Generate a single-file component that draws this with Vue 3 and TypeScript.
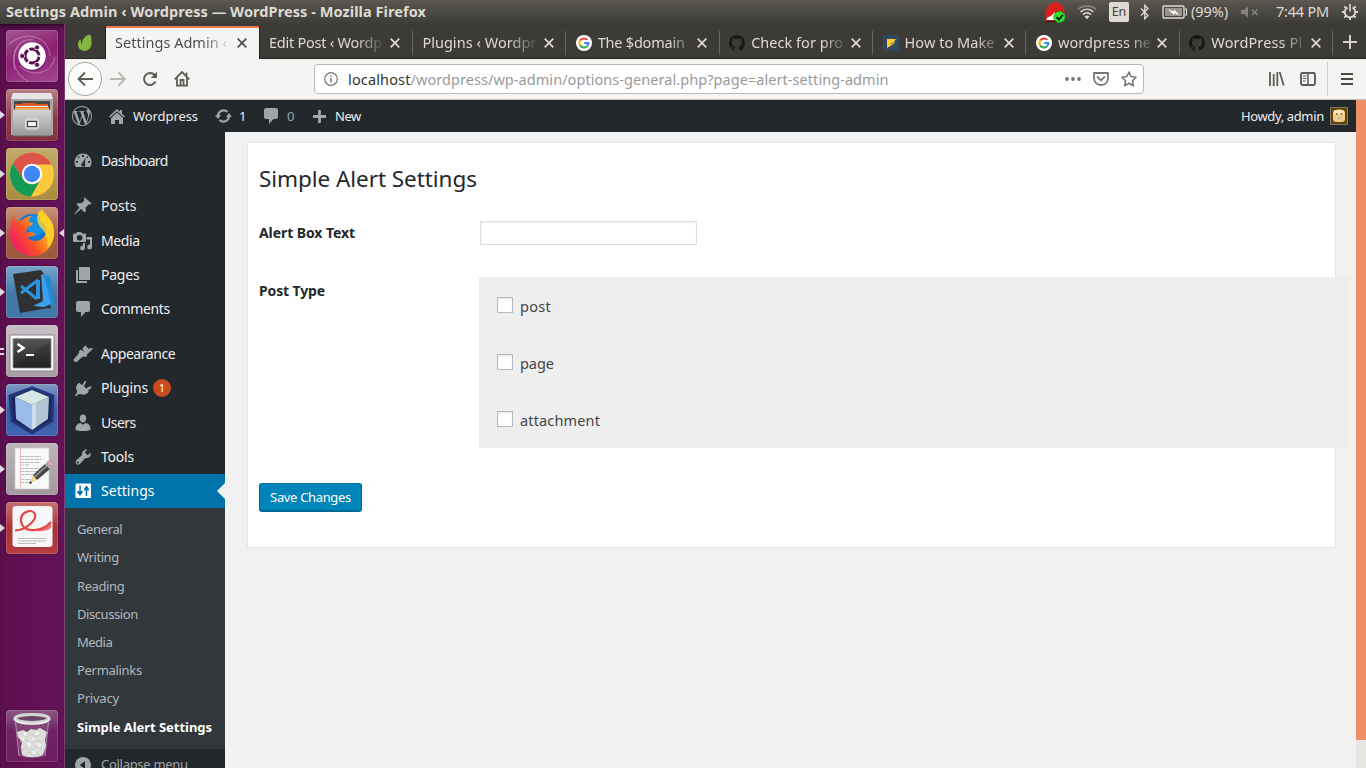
<script setup lang="ts">
import { ref } from 'vue'

// Spreads the text of an element over a given width by letter spacing.
const vFit = {
  mounted(el: HTMLElement, binding: { value: number }) {
    const text = (el.textContent || '').trim()
    el.style.display = 'inline-block'
    el.style.whiteSpace = 'pre'
    const natural = el.getBoundingClientRect().width
    if (text.length > 1) {
      el.style.letterSpacing = ((binding.value - natural) / (text.length - 0.5)).toFixed(3) + 'px'
    }
    el.style.width = binding.value + 'px'
  },
}

const google =
  '<circle cx="8" cy="8" r="8" fill="#fff"/><g fill="none" stroke-width="2.1"><path d="M4.3 5.4A4.5 4.5 0 0 1 11.3 4.9" stroke="#ea4335"/><path d="M4.3 5.4A4.5 4.5 0 0 0 4.2 10.5" stroke="#fbbc05"/><path d="M4.2 10.4A4.5 4.5 0 0 0 10.9 11.5" stroke="#34a853"/><path d="M8.2 8H12.5A4.5 4.5 0 0 1 10.8 11.5" stroke="#4285f4"/></g>'
const github =
  '<path fill="#191717" d="M8 0C3.58 0 0 3.58 0 8c0 3.54 2.29 6.53 5.47 7.59.4.07.55-.17.55-.38 0-.19-.01-.82-.01-1.49-2.01.37-2.53-.49-2.69-.94-.09-.23-.48-.94-.82-1.13-.28-.15-.68-.52-.01-.53.63-.01 1.08.58 1.23.82.72 1.21 1.87.87 2.33.66.07-.52.28-.87.51-1.07-1.78-.2-3.64-.89-3.64-3.95 0-.87.31-1.59.82-2.15-.08-.2-.36-1.02.08-2.12 0 0 .67-.21 2.2.82.64-.18 1.32-.27 2-.27.68 0 1.36.09 2 .27 1.53-1.04 2.2-.82 2.2-.82.44 1.1.16 1.92.08 2.12.51.56.82 1.27.82 2.15 0 3.07-1.87 3.75-3.65 3.95.29.25.54.73.54 1.48 0 1.07-.01 1.93-.01 2.2 0 .21.15.46.55.38A8.01 8.01 0 0016 8c0-4.42-3.58-8-8-8z"/>'
const bolt = '<path fill="#34495e" d="M0 0h16v16H0z"/><path fill="#fc3" d="M4 4h9l-2.4 3.4H13L4 13z"/><path d="M7 9l6-1.6" stroke="#34495e" stroke-width=".6"/>'

interface Tab { text: string; w: number; icon?: string; active?: boolean }
const tabs: Tab[] = [
  { text: 'Settings Admin ‹', w: 112, active: true },
  { text: 'Edit Post ‹ Wordp', w: 113 },
  { text: 'Plugins ‹ Wordpr', w: 114 },
  { text: 'The $domain', w: 87, icon: google },
  { text: 'Check for pro', w: 92, icon: github },
  { text: 'How to Make', w: 90, icon: bolt },
  { text: 'wordpress ne', w: 93, icon: google },
  { text: 'WordPress Pl', w: 91, icon: github },
]

interface App { name: string; bg: string; art: string; marks: number; focus?: boolean }
const apps: App[] = [
  {
    name: 'dash', bg: 'linear-gradient(160deg,#a2578f,#8c1f75 50%,#a34a90)', marks: 0,
    art: '<g fill="none" stroke="#fff" stroke-opacity=".25" stroke-width="1.3"><path d="M3 14C20 0 42 6 44 26"/><path d="M9 40C4 20 14 8 27 10"/><path d="M49 27C46 44 26 48 14 36"/><path d="M22 51C8 44 4 28 12 16"/></g><circle cx="26" cy="27" r="14" fill="#570c49" opacity=".5"/><circle cx="26" cy="26" r="13.7" fill="#fff"/><circle cx="26" cy="26" r="7" fill="none" stroke="#5e1150" stroke-width="3" stroke-dasharray="13 1.66" stroke-dashoffset="-.8"/><g fill="#5e1150" stroke="#fff" stroke-width=".7"><circle cx="16.2" cy="26" r="2.5"/><circle cx="31" cy="17.4" r="2.5"/><circle cx="31" cy="34.8" r="2.5"/></g>',
  },
  {
    name: 'files', bg: 'linear-gradient(#b98086,#8f3a48 55%,#84303e)', marks: 1,
    art: '<defs><linearGradient id="fa" x2="0" y2="1"><stop stop-color="#d4d4d4"/><stop offset="1" stop-color="#989898"/></linearGradient></defs><path d="M7 4h38l2 6v36H5V10z" fill="#a8a8a8"/><path d="M7 4h38l2 6H5z" fill="#e6e6e6"/><path d="M8 12h36v9H8z" fill="#4c4845"/><path d="M9 15h7l1-1h12l1 1h12v6H9z" fill="#d85b2a"/><path d="M9 18.500h34v2.500H9z" fill="#f5a94d"/><path d="M10 17h32v1H10z" fill="#fff"/><path d="M7 20.700h38V47H7z" fill="url(#fa)"/><path d="M7 46.500h38v1H7z" fill="#666"/><rect x="19.500" y="30" width="13" height="10" rx="2" fill="#bbb" stroke="#e4e4e4" stroke-width="1"/><rect x="21.500" y="32.500" width="9" height="5" fill="#eee" stroke="#444" stroke-width="1"/>',
  },
  {
    name: 'chrome', bg: 'linear-gradient(#c3ad6d,#a98b3e)', marks: 1,
    art: '<circle cx="26" cy="26.500" r="22" fill="#fbc93b"/><path d="M6.900 15.500A22 22 0 0 1 45.500 16.500H26a10 10 0 0 0-9 5.500l-.5 9z" fill="#dc5548"/><path d="M6.900 15.500A22 22 0 0 0 25 48.500L34.500 31.500A10 10 0 0 1 17.400 31.500z" fill="#139b57"/><circle cx="26" cy="26" r="10.200" fill="#fff"/><circle cx="26" cy="26" r="8.200" fill="#4285f4"/>',
  },
  {
    name: 'firefox', bg: 'linear-gradient(#c89378,#a15d43 55%,#9b5940)', marks: 1, focus: true,
    art: '<defs><linearGradient id="ff" x1=".95" y1=".1" x2=".1" y2=".7"><stop stop-color="#ffe226"/><stop offset=".4" stop-color="#ffa21b"/><stop offset=".7" stop-color="#fb4f28"/><stop offset="1" stop-color="#f4245c"/></linearGradient></defs><circle cx="26" cy="23" r="16" fill="#1273d6"/><path d="M15 15c5-7 15-9 20-4l2 15-9 4z" fill="#1490e4"/><path d="M9 7c-1 4 0 7 1 9 2-3 5-4 7-3 2-3 5-4 9-4-3 2-4 4-3 6l4 1c0 3-6 3-6 6l-1 4c3-2 8-1 10 2-3 0-5 3-9 2 4 5 12 5 16 1 4-4 5-9 1-14-6-6-6-9-2-15 3 6 12 10 12 23C48 40 38 49 27 49 14 49 4 39 4 27c0-8 2-15 5-20z" fill="url(#ff)"/><path d="M34 3c3 6 14 12 14 24 0 6-3 11-7 14 2-8-1-15-6-20-5-6-5-12-1-18z" fill="#ffd52b" opacity=".8"/>',
  },
  {
    name: 'code', bg: 'linear-gradient(#77a5cc,#4377a7 55%,#4278aa)', marks: 1,
    art: '<path d="M37 8l7 2 4 27-8 5z" fill="#2489d3"/><path d="M7 8l28-4 3 4 7 35-3-1-28 5z" fill="#303032"/><path d="M35 9l3-1 7 30-7 3-11-1 10-5z" fill="#39a1ec"/><path d="M15 20l16 13M15 27l17-13" stroke="#2b94dc" stroke-width="3"/><path d="M32 14v19" stroke="#2b94dc" stroke-width="4"/>',
  },
  {
    name: 'terminal', bg: 'linear-gradient(#c7bfc5,#a79da5)', marks: 2,
    art: '<defs><linearGradient id="tm" x2="0" y2="1"><stop stop-color="#555"/><stop offset="1" stop-color="#252525"/></linearGradient></defs><path d="M4 10h44v36H4z" fill="#f7f7f7" stroke="#8b868b"/><path d="M7 13.500h38V43H7z" fill="url(#tm)" stroke="#999" stroke-width=".8"/><path d="M7 43L45 15v28z" fill="#111" opacity=".2"/><path d="M11.500 19l6 4-6 4" fill="none" stroke="#fff" stroke-width="2.500"/><path d="M20 30h8" stroke="#fff" stroke-width="2"/>',
  },
  {
    name: 'cube', bg: 'linear-gradient(#7f96c5,#3e5fa8 50%,#4063b0)', marks: 1,
    art: '<path d="M26 4l21 8-1 25-20 12L6 37 4 12z" fill="#18245a" stroke="#22377c" stroke-width="3" stroke-linejoin="round"/><path d="M26 6l17 7-17 8L9 13z" fill="#d6e8e6"/><path d="M9 13l17 8v25L10 35z" fill="#9bbbea"/><path d="M26 21l17-8-1 22-16 11z" fill="#b0c6d2"/><path d="M26 21l4-2v24l-4 3z" fill="#d9e8f4" opacity=".7"/>',
  },
  {
    name: 'editor', bg: 'linear-gradient(#bdb5bb,#a198a0)', marks: 1,
    art: '<path d="M9 5h34v41H9z" fill="#f8f8f8" stroke="#ccc" stroke-width=".8"/><path d="M14.500 5v41" stroke="#eba9a9" stroke-width=".8"/><g stroke="#bbb" stroke-width="1" stroke-dasharray="3 .8 5 .6"><path d="M15 13.500h20M15 16.500h21M15 19.500h18M15 22h8M15 25.500h22M15 28.500h18M15 31.500h16M15 36.500h13M15 39.500h10"/></g><path d="M23 41l4-9 4 5z" fill="#eed984"/><path d="M23 41l1.500-3 1.600 2z" fill="#222"/><path d="M27 32l12-11 5 5-13 11z" fill="#444"/><path d="M28 33l12-11 1.500 1.500-12 11z" fill="#888"/><path d="M39 21l2-2 5 5-2 2z" fill="#aaa"/><path d="M41 19c2-3 8 1 5 5z" fill="#e7a4cd" stroke="#b77" stroke-width=".5"/>',
  },
  {
    name: 'reader', bg: 'linear-gradient(#c7706f,#a93236 50%,#b63e40)', marks: 1,
    art: '<rect x="7" y="5" width="39" height="41" rx="3.500" fill="#8d2b2e" opacity=".6"/><rect x="6.500" y="4" width="40" height="41" rx="3.500" fill="#f7f7f7"/><path d="M9 28.500C21 28 31 17 29 12 26 6 14 10 15 19c1 12 20 12 30 1" fill="none" stroke="#e34848" stroke-width="2.200"/><path d="M25 28c8 0 15-4 20-8v6c-6 4-13 4-20 2z" fill="#e34848" opacity=".75"/><g stroke="#bbb" stroke-width="1.200"><path d="M12 36.500h28M12 39h28M12 41.500h18"/></g>',
  },
]
const trash =
  '<path d="M9 9l4 37c5 3 21 3 26 0l4-37z" fill="#9c6c93" opacity=".4"/><path d="M9.500 12L13 46M42.500 12L39 46" stroke="#c8b5c4" stroke-width="1" opacity=".7"/><path d="M11 22l6-2 4 2 4-3 5 1 4-2 7 4-2 8 1 6-3 9c-6 3-16 3-21 0l-1-8 1-5-4-5z" fill="#dcdedb"/><g fill="none" stroke="#c6c8c3" stroke-width="1"><path d="M16 24l5 3 4-4 4 5 6-4M14 32l6-3 5 5 5-4 6 2M16 40l5-4 4 5 5-5 6 3M19 45l4-3 5 4 5-3"/></g><g fill="#f4f5f3"><path d="M17 22l4 1-2 4zM30 21l4 2-5 3zM21 32l5 2-4 4zM31 33l5 1-4 4zM15 28l4 0-2 3zM27 27l3 2-4 2zM26 41l4 0-2 4z"/></g><ellipse cx="26" cy="8.500" rx="17" ry="4" fill="#6e4467" stroke="#d4d5d1" stroke-width="3.200"/><path d="M9 9c1 7 33 7 34 0" fill="none" stroke="#fff" stroke-width="1.200"/>'

const ic = {
  dashboard: '<path fill-rule="evenodd" d="M10 2.500a8.500 8.500 0 0 0-8.300 10.300c.3 1.500.8 2.700 1.300 3.200h14c.6-.6 1-1.700 1.300-3.200A8.500 8.500 0 0 0 10 2.500zM9 4h2v2H9zM5 5.500l1.500 0 0 1.600-1.600 0zM13.600 5.500h1.500v1.600h-1.600zM2.900 10h2v1.800h-2zM15 10h2.100v1.800H15zM12.500 6.500l-.7 5.800a2 2 0 1 1-2.400-.4z"/>',
  posts: '<path d="M11.400 1.200l7.300 6.400-1.500 1-1.300-.3-3.200 3.300.2 3.700-1.600 1-3.200-3.300-6.300 5.400-.5-.5 5.200-6.400-3-3 1.300-1.500 3.500.2 3.200-2.700-.5-2z"/>',
  media: '<path fill-rule="evenodd" d="M1 2.500h2L4 1h4l1.200 1.500H12a1 1 0 0 1 1 1V11H1a1 1 0 0 1-1-1V3.500a1 1 0 0 1 1-1zM6.700 4a2.800 2.800 0 1 0 0 5.600 2.800 2.800 0 0 0 0-5.600zM13.500 6H19v10a2.400 2.400 0 1 1-2-2.400V8.500h-3.500zM12 12v5a2.400 2.400 0 1 1-2-2.400V12z"/>',
  pages: '<path d="M6 2h11v13H6zM3 5h2v11h9v2H3z"/>',
  comments: '<path d="M5 2h10a2 2 0 0 1 2 2v7a2 2 0 0 1-2 2h-2.500L8 18v-5H5a2 2 0 0 1-2-2V4a2 2 0 0 1 2-2z"/>',
  appearance: '<path d="M9.500 4.300l3-3.100 3.300 3 3.500-.1.700.7-7.400 6.900zM8.300 5.500l6 6-1.500 1.500-2.600-.4c-2 1-4.500 4-6.300 5.100-1.800 1-4-1-2.900-2.800 1.100-1.800 4.100-3.900 5.200-6.300l-.4-1.700z"/><path d="M12.600 1.600l4.200 4" stroke="#23282d" stroke-width=".7"/>',
  plugins: '<path d="M13.100 4.400L10.800 8l2.500 2.500 3.700-2.200c1-.3 2 .9 1.200 1.700l-3.300 2.400 1.100 1.200c-1.500 2.400-5.300 4.400-8.500 2.400l-2.300.3-2 1.900-1.300-1.200 2-2 .1-2.300C2 9.300 3.800 6 6.300 4.700l2.800 2.500 2.500-3.800c.8-.9 2 .1 1.500 1z"/>',
  users: '<path d="M10 9.500c-2.200 0-3.200-2.300-3.200-4.300C6.800 2.800 8 1.500 10 1.500s3.200 1.300 3.200 3.700c0 2-1 4.300-3.200 4.300zM2.500 15.500c0-3 2-5.200 5-5.500l2.500 1.800 2.500-1.800c3 .3 5 2.500 5 5.500v1.200C15 18.400 5 18.400 2.500 16.700z"/>',
  tools: '<path d="M17.600 5.700c.8 3-1.600 5.900-5.100 5.400l-5.700 6c-2.300 2-5.500-1-3.700-3.500l6-5.600C8.400 5 11 2.200 14.400 2.600l-2.700 2.700 2.800 3z"/><circle cx="4.800" cy="15.500" r="1" fill="#23282d"/>',
  settings: '<rect x="2.500" y="2.500" width="15.500" height="14.500" rx="1.200"/><g fill="#0073aa"><path d="M6.300 4.500h1.500V11H10l-3 4-3-4h2.300z"/><path d="M4.300 10h5.500v1H4.300z"/><path d="M12.700 15h1.500V8.500h2.300l-3-4-3 4h2.200z"/><path d="M10.800 8.500h5.500v1h-5.500z"/></g>',
}
interface Item { text: string; w: number; icon: string; gap?: boolean; badge?: string; current?: boolean }
const menu: Item[] = [
  { text: 'Dashboard', w: 67, icon: ic.dashboard },
  { text: 'Posts', w: 35.5, icon: ic.posts, gap: true },
  { text: 'Media', w: 39, icon: ic.media },
  { text: 'Pages', w: 38.5, icon: ic.pages },
  { text: 'Comments', w: 69, icon: ic.comments },
  { text: 'Appearance', w: 74.5, icon: ic.appearance, gap: true },
  { text: 'Plugins', w: 47, icon: ic.plugins, badge: '1' },
  { text: 'Users', w: 35, icon: ic.users },
  { text: 'Tools', w: 33, icon: ic.tools },
  { text: 'Settings', w: 53.5, icon: ic.settings, current: true },
]
const submenu = [
  { text: 'General', w: 45.5 },
  { text: 'Writing', w: 42 },
  { text: 'Reading', w: 47.5 },
  { text: 'Discussion', w: 61 },
  { text: 'Media', w: 35.5 },
  { text: 'Permalinks', w: 65 },
  { text: 'Privacy', w: 42 },
  { text: 'Simple Alert Settings', w: 135, current: true },
]
const postTypes = ref([
  { text: 'post', w: 31, on: false },
  { text: 'page', w: 34, on: false },
  { text: 'attachment', w: 80, on: false },
])
const alertText = ref('')
</script>

<template>
  <div class="desktop">
    <header class="panel">
      <span class="win-title" v-fit="420">Settings Admin ‹ Wordpress — WordPress - Mozilla Firefox</span>
      <div class="tray">
        <svg class="hat" width="22" height="22" viewBox="0 0 22 22"><path d="M1 20C2 17 0 13 3 7 6 0 16-1 19 6c2 4 2 8 2 12z" fill="#dc1f1c" /><path d="M3 19c-1-1 0-3 4-4l4-4 0 4 2 1-1 3z" fill="#fff" /><path d="M2 20.500h10" stroke="#400" stroke-width="1" /><circle cx="15.500" cy="16" r="5.800" fill="#2be52b" stroke="#1a701a" stroke-width=".6" /><path d="M12.500 16l2.400 2.700 4-5" fill="none" stroke="#111" stroke-width="1.800" /></svg>
        <svg class="wifi" width="20" height="16" viewBox="0 0 20 16" fill="none" stroke="#dfdbd2"><path d="M1 5.500C6 .8 14 .8 19 5.500" stroke="#8d8a82" stroke-width="1.500" /><path d="M3.500 8c4-3.600 9-3.600 13 0" stroke-width="1.500" /><path d="M6 10.600c2.500-2.300 5.500-2.300 8 0" stroke-width="1.500" /><path d="M7.500 12.500c1.500-1.300 3.500-1.300 5 0L10 15.200z" fill="#dfdbd2" stroke="none" /></svg>
        <span class="lang">En</span>
        <svg class="bt" width="10" height="16" viewBox="0 0 10 16" fill="none" stroke="#dfdbd2" stroke-width="1.300"><path d="M1 4.500l7 7-3.300 3.300V1.200L8 4.500l-7 7" /></svg>
        <svg class="bat" width="26" height="14" viewBox="0 0 26 14"><rect x="1" y="1" width="21" height="12" rx="1" fill="none" stroke="#dfdbd2" stroke-width="1.400" /><path d="M3 3h17v8H3z" fill="#97948b" /><path d="M23 4h1.500v6H23" fill="none" stroke="#dfdbd2" stroke-width="1.200" /><path d="M6 4l6 2.500 0-2 6 6-6-2.500 0 2z" fill="#fff" /></svg>
        <span class="pct" v-fit="37">(99%)</span>
        <svg class="snd" width="18" height="12" viewBox="0 0 18 12"><path d="M0 4h3l4-3.500v11L3 8H0z" fill="#88857d" /><path d="M11 3.500l5.500 5.500M16.500 3.500L11 9" stroke="#88857d" stroke-width="1.500" /></svg>
        <span class="clock" v-fit="53">7:44 PM</span>
        <svg class="gear" width="16" height="16" viewBox="0 0 16 16" fill="none" stroke="#dfdbd2"><path d="M5.500 3.500a5.200 5.200 0 1 0 5 0" stroke-width="1.700" /><path d="M8 0v7.500" stroke-width="1.600" /><path d="M0 8h3M13 8h3M8 13v3M2.300 2.300l2 2M13.700 2.300l-2 2M2.300 13.700l2-2M13.700 13.700l-2-2" stroke-width="1.900" /></svg>
      </div>
    </header>

    <div class="workspace">
      <aside class="launcher">
        <div v-for="a in apps" :key="a.name" class="slot">
          <div class="marks"><i v-for="n in a.marks" :key="n" :class="{ bar: a.marks > 1 }"></i></div>
          <div class="tile" :style="{ background: a.bg }"><svg width="52" height="52" viewBox="0 0 52 52" v-html="a.art"></svg></div>
          <b v-if="a.focus" class="focus"></b>
        </div>
        <div class="slot trash"><div class="marks"></div><div class="tile bin"><svg width="52" height="52" viewBox="0 0 52 52" v-html="trash"></svg></div></div>
      </aside>

      <main class="firefox">
        <div class="tabbar">
          <div class="pinned"><svg width="16" height="18" viewBox="0 0 16 18"><path d="M12.800.5C14 1 15 5 14.500 10c-.4 4-3 7-7 7C3.500 17 1 14 1 10.500c0-2 .7-4 2-5 .5-.3.9 0 .8.500-.2 2 .4 3.800 1 4.500C4.500 6 8 1.500 12.800.5z" fill="#82b541" /></svg></div>
          <div v-for="t in tabs" :key="t.text" class="tab" :class="{ active: t.active }">
            <svg v-if="t.icon" class="fav" width="16" height="16" viewBox="0 0 16 16" v-html="t.icon"></svg>
            <div class="tabtext" :class="{ short: t.icon }"><span v-fit="t.w">{{ t.text }}</span></div>
            <svg class="close" width="10" height="10" viewBox="0 0 10 10"><path d="M.7.700l8.600 8.600M9.300.700L.7 9.300" stroke="currentColor" stroke-width="1.700" /></svg>
          </div>
          <div class="plus"><svg width="14" height="14" viewBox="0 0 14 14"><path d="M7 0v14M0 7h14" stroke="#d6d2c9" stroke-width="2" /></svg></div>
        </div>

        <div class="toolbar">
          <div class="back"><svg width="16" height="16" viewBox="0 0 16 16" fill="none" stroke="#5c5b58" stroke-width="1.800"><path d="M16 8H1.500M8 1.500L1.500 8 8 14.500" /></svg></div>
          <svg class="fwd" width="16" height="16" viewBox="0 0 16 16" fill="none" stroke="#b9b7b3" stroke-width="1.800"><path d="M0 8h14.500M8.500 1.500L15 8l-6.500 6.500" /></svg>
          <svg class="reload" width="16" height="16" viewBox="0 0 16 16" fill="none" stroke="#5c5b58" stroke-width="1.900"><path d="M13.500 10.500A6 6 0 1 1 12.500 4l1 1.200" /><path d="M15 .8V7H8.800z" fill="#5c5b58" stroke="none" /></svg>
          <svg class="homebtn" width="16" height="16" viewBox="0 0 16 16" fill="none" stroke="#5c5b58" stroke-width="1.800"><path d="M.7 8.300L8 1l7.300 7.300M3 7v7.700h10V7" /><path d="M6.500 14V9h3v5" /><path d="M12.500 1.500V5" /></svg>
          <div class="urlbar">
            <svg width="14" height="14" viewBox="0 0 14 14"><circle cx="7" cy="7" r="6.300" fill="none" stroke="#777" stroke-width="1.200" /><path d="M7 6v4.500M7 3.200v1.600" stroke="#777" stroke-width="1.500" /></svg>
            <span class="host" v-fit="62.5">localhost</span><span class="path" v-fit="478">/wordpress/wp-admin/options-general.php?page=alert-setting-admin</span>
            <svg class="dots" width="16" height="4" viewBox="0 0 16 4" fill="#777673"><circle cx="2" cy="2" r="1.900" /><circle cx="8" cy="2" r="1.900" /><circle cx="14" cy="2" r="1.900" /></svg>
            <svg class="pocket" width="16" height="14" viewBox="0 0 16 14" fill="none" stroke="#777673" stroke-width="1.800"><path d="M1 1h14v5c0 4.500-3 7-7 7S1 10.500 1 6z" stroke-linejoin="round" /><path d="M4.500 5L8 8.300 11.500 5" stroke-linecap="round" /></svg>
            <svg class="star" width="16" height="16" viewBox="0 0 16 16" fill="none" stroke="#777673" stroke-width="1.600" stroke-linejoin="round"><path d="M8 1l2.100 4.500 4.900.7-3.500 3.500.8 5L8 12.300l-4.300 2.400.8-5L1 6.200l4.900-.7z" /></svg>
          </div>
          <svg class="library" width="16" height="14" viewBox="0 0 16 14" stroke="#5c5b58" stroke-width="1.800"><path d="M1 0v14M4.700 2v12M8.300 0v14M10.700 0l4 13.500" /></svg>
          <svg class="sidebar" width="16" height="14" viewBox="0 0 16 14" fill="none" stroke="#5c5b58"><rect x="1" y="1" width="14" height="12" rx="1.500" stroke-width="1.900" /><path d="M8 1v12" stroke-width="1.500" /><path d="M3 4h3.500M3 6.500h3.500M3 9h2.500" stroke-width="1" /></svg>
          <div class="burger"><svg width="12" height="12" viewBox="0 0 12 12" stroke="#4a4945" stroke-width="1.800"><path d="M0 1h12M0 6h12M0 11h12" /></svg></div>
        </div>

        <div class="viewport">
          <div class="wp">
            <nav class="adminbar">
              <svg class="wplogo" width="20" height="20" viewBox="0 0 24 24" fill="#a0a5aa"><path d="M21.469 6.825c.84 1.537 1.318 3.300 1.318 5.175 0 3.979-2.156 7.456-5.363 9.325l3.295-9.527c.615-1.540.82-2.771.82-3.864 0-.405-.026-.780-.070-1.110m-7.981.105c.647-.030 1.232-.105 1.232-.105.582-.075.514-.930-.067-.899 0 0-1.755.135-2.880.135-1.064 0-2.850-.150-2.850-.150-.585-.030-.661.855-.075.885 0 0 .540.061 1.125.090l1.680 4.605-2.370 7.080L5.354 6.900c.649-.030 1.234-.100 1.234-.100.585-.075.516-.930-.065-.896 0 0-1.746.138-2.874.138-.200 0-.438-.008-.690-.015C4.911 3.150 8.235 1.215 12 1.215c2.809 0 5.365 1.072 7.286 2.833-.046-.003-.091-.009-.141-.009-1.060 0-1.812.923-1.812 1.914 0 .890.513 1.643 1.060 2.531.411.720.890 1.643.890 2.977 0 .915-.354 1.994-.821 3.479l-1.075 3.585-3.900-11.610.001.014zM12 22.784c-1.059 0-2.081-.153-3.048-.437l3.237-9.406 3.315 9.087c.024.053.050.101.078.149-1.120.393-2.325.609-3.582.609M1.211 12c0-1.564.336-3.050.935-4.390L7.290 21.709C3.694 19.960 1.212 16.271 1.211 12M12 0C5.385 0 0 5.385 0 12s5.385 12 12 12 12-5.385 12-12S18.615 0 12 0" /></svg>
              <svg class="house" width="16" height="15" viewBox="0 0 16 15" fill="#a0a5aa"><path d="M8 0l3 2.800V1h2v3.700L16 7.600l-1 1L8 2.200 1 8.600l-1-1z" /><path d="M8 3.600l6 5.400v6h-4v-4H6v4H2V9z" /></svg>
              <span class="site" v-fit="65">Wordpress</span>
              <svg class="upd" width="17" height="14" viewBox="0 0 17 14" fill="none" stroke="#a0a5aa" stroke-width="2.300"><path d="M3 6.500A5.600 5.600 0 0 1 12.500 3M14 7.500A5.600 5.600 0 0 1 4.500 11" /><path d="M0 6h6L3 10zM11 8h6l-3-4z" fill="#a0a5aa" stroke="none" /></svg>
              <span class="n1">1</span>
              <svg class="bub" width="20" height="20" viewBox="0 0 20 20" fill="#a0a5aa" v-html="ic.comments"></svg>
              <span class="n0">0</span>
              <svg class="add" width="13" height="13" viewBox="0 0 13 13"><path d="M6.500 0v13M0 6.500h13" stroke="#a0a5aa" stroke-width="2.800" /></svg>
              <span class="new" v-fit="26">New</span>
              <span class="howdy" v-fit="83">Howdy, admin</span>
              <svg class="avatar" width="18" height="18" viewBox="0 0 18 18"><path d="M.5.500h17v17H.5z" fill="#604306" stroke="#827865" /><rect x="3" y="3" width="12" height="12" rx="3" fill="#f4cc8a" /><path d="M4 4c2-2 8-2 10 0v3H4z" fill="#fbe5b9" /><circle cx="6.800" cy="7" r=".8" fill="#3b2412" /><circle cx="11.500" cy="7" r=".8" fill="#3b2412" /><circle cx="9" cy="11.200" r="1.600" fill="#c2b8a8" /></svg>
            </nav>

            <div class="wpbody">
              <div class="adminmenu">
                <div v-for="m in menu" :key="m.text" class="item" :class="{ gap: m.gap, current: m.current }">
                  <svg width="20" height="20" viewBox="0 0 20 20" v-html="m.icon"></svg>
                  <span v-fit="m.w">{{ m.text }}</span>
                  <em v-if="m.badge">{{ m.badge }}</em>
                  <i v-if="m.current" class="notch"></i>
                </div>
                <ul class="sub">
                  <li v-for="s in submenu" :key="s.text" :class="{ on: s.current }"><span v-fit="s.w">{{ s.text }}</span></li>
                </ul>
                <div class="collapse">
                  <svg width="16" height="16" viewBox="0 0 16 16"><circle cx="8" cy="8" r="8" fill="#a0a5aa" /><path d="M10 4v8L4.800 8z" fill="#23282d" /></svg>
                  <span v-fit="87">Collapse menu</span>
                </div>
              </div>

              <section class="content">
                <div class="card">
                  <h2><span v-fit="218">Simple Alert Settings</span></h2>
                  <div class="field">
                    <label class="th"><span v-fit="96">Alert Box Text</span></label>
                    <input v-model="alertText" type="text" />
                  </div>
                  <div class="field types">
                    <label class="th"><span v-fit="66">Post Type</span></label>
                    <div class="box">
                      <label v-for="p in postTypes" :key="p.text" class="opt">
                        <input v-model="p.on" type="checkbox" /><span v-fit="p.w">{{ p.text }}</span>
                      </label>
                    </div>
                  </div>
                  <button><span v-fit="81">Save Changes</span></button>
                </div>
              </section>
            </div>
          </div>
          <div class="scroll"><div class="thumb"></div></div>
        </div>
      </main>
    </div>
  </div>
</template>

<style>
html, body { margin: 0; overflow: hidden; }
</style>

<style scoped>
* { box-sizing: border-box; }
svg { display: block; flex: none; }
.desktop { width: 1366px; height: 768px; overflow: hidden; display: flex; flex-direction: column; font-family: "Noto Sans", "Open Sans", sans-serif; font-size: 14px; }
.panel { height: 24px; flex: none; background: linear-gradient(#5d5a51, #53514a 20%, #3d3c37); display: flex; align-items: center; padding-left: 6px; color: #dfdbd2; }
.win-title { font-weight: 700; font-size: 14.5px; line-height: 22px; height: 24px; flex: none; }
.tray { margin-left: auto; width: 322px; flex: none; display: flex; align-items: center; font-size: 14.5px; line-height: 22px; }
.tray span { height: 24px; }
.wifi { margin-left: 11px; }
.tray .lang { margin-left: 12px; width: 20px; height: 20px; background: #dfdbd2; color: #45433d; border-radius: 2px; font-size: 12.5px; line-height: 20px; text-align: center; }
.bt { margin-left: 11px; }
.bat { margin-left: 12px; }
.pct { margin-left: 3px; flex: none; }
.snd { margin-left: 13px; }
.clock { margin-left: 17px; flex: none; }
.gear { margin-left: 13px; }

.workspace { flex: 1; display: flex; min-height: 0; }
.launcher { width: 65px; flex: none; background: linear-gradient(90deg, #5b0f4e, #66135a); border-right: 1px solid #7b4070; box-shadow: inset 0 5px 5px -3px #25051f; display: flex; flex-direction: column; padding-top: 6px; gap: 7px; }
.slot { display: flex; align-items: center; height: 52px; flex: none; }
.marks { width: 6px; display: flex; flex-direction: column; gap: 3px; }
.marks i { width: 0; height: 0; border: 4px solid transparent; border-left: 5px solid #dedade; border-right: 0; }
.marks i.bar { width: 4px; height: 2px; border: 0; background: #dedade; }
.focus { width: 0; height: 0; margin-left: 1px; border: 4px solid transparent; border-right: 5px solid #dedade; border-left: 0; }
.tile { width: 52px; height: 52px; border-radius: 4px; overflow: hidden; box-shadow: inset 0 0 0 1px rgba(255, 255, 255, .15), 0 0 2px rgba(0, 0, 0, .4); }
.trash { margin-top: auto; margin-bottom: 6px; }
.bin { background: linear-gradient(#8c5884, #6f2364 40%, #6b1d60); }

.firefox { flex: 1; min-width: 0; display: flex; flex-direction: column; }
.tabbar { height: 35px; flex: none; display: flex; background: #3c3b37; box-shadow: inset 0 -1px #24231f; }
.pinned { width: 41px; flex: none; display: flex; align-items: center; padding: 3px 0 0 12px; }
.tab { width: 153.4px; flex: none; display: flex; align-items: center; color: #dfdbd2; font-size: 14.5px; position: relative; padding: 3px 12.4px 0 9.6px; }
.tab:not(.active)::after { content: ""; position: absolute; right: 0; top: 7px; width: 1px; height: 24px; background: #686660; }
.tab.active { background: #f5f4f2; color: #4c4c4c; margin-top: 2px; border-top: 2px solid #f0764a; padding: 0 12px 1px 9px; box-shadow: -1px 0 #24231f, 1px 0 #24231f; }
.fav { margin-right: 6px; }
.tabtext { width: 115px; overflow: hidden; line-height: 22px; height: 24px; flex: none; -webkit-mask-image: linear-gradient(90deg, #000 75%, transparent 102%); mask-image: linear-gradient(90deg, #000 75%, transparent 102%); }
.tabtext.short { width: 95px; }
.close { margin-left: auto; }
.plus { flex: 1; display: flex; align-items: center; justify-content: center; padding-top: 1px; }

.toolbar { height: 41px; flex: none; background: #f5f4f2; border-bottom: 1px solid #c5c2bd; display: flex; align-items: center; padding-left: 3px; }
.back { width: 34px; height: 34px; border: 1px solid #a6a4a1; border-radius: 50%; background: #fcfcfb; display: flex; align-items: center; justify-content: center; }
.fwd { margin-left: 8px; }
.reload { margin-left: 16px; }
.homebtn { margin-left: 16px; }
.urlbar { margin-left: 124px; width: 830px; height: 30px; border: 1px solid #bbb8b3; border-radius: 4px; background: #fff; display: flex; align-items: center; padding: 0 6px 0 9px; font-size: 14.5px; line-height: 28px; }
.host { margin-left: 10px; color: #333; flex: none; }
.path { color: #999; flex: none; }
.dots { margin-left: auto; }
.pocket { margin-left: 12px; }
.star { margin-left: 12px; }
.library { margin-left: 125px; }
.sidebar { margin-left: 15px; }
.burger { margin-left: 11px; height: 34px; border-left: 1px solid #d6d3cf; display: flex; align-items: center; padding-left: 13px; }

.viewport { flex: 1; min-height: 0; display: flex; }
.wp { width: 1291px; flex: none; display: flex; flex-direction: column; background: #f1f1f1; }
.scroll { flex: 1; background: #e8e6e3; }
.thumb { height: 640px; background: #f08e66; }
.adminbar { height: 32px; flex: none; background: #23282d; color: #eee; font-size: 13px; line-height: 32px; display: flex; align-items: center; padding: 0 8px 0 7px; }
.house { margin-left: 17px; }
.site { margin-left: 8px; flex: none; }
.upd { margin-left: 17px; }
.n1 { margin-left: 7px; width: 8px; }
.bub { margin-left: 14px; }
.n0 { margin-left: 6px; width: 8px; color: #9ea3a8; }
.add { margin-left: 18px; }
.new { margin-left: 9px; flex: none; }
.howdy { margin-left: auto; flex: none; }
.avatar { margin-left: 6px; }

.wpbody { flex: 1; display: flex; min-height: 0; }
.adminmenu { width: 160px; flex: none; background: #23282d; padding-top: 11.5px; color: #eee; }
.item { height: 34.3px; line-height: 34px; display: flex; align-items: center; padding-left: 8px; position: relative; }
.item.gap { margin-top: 11px; }
.item:nth-child(3) { margin-top: .6px; margin-bottom: -.6px; }
.item svg { fill: #a0a5aa; margin-right: 8px; }
.item.current { background: #0073aa; color: #fff; }
.item.current svg { fill: #fff; }
.item em { font-style: normal; margin-left: 5px; width: 18px; height: 18px; border-radius: 9px; background: #ca4a1f; color: #fff; font-size: 11px; line-height: 18px; text-align: center; }
.notch { position: absolute; right: 0; top: 9px; border: 8px solid transparent; border-right-color: #f1f1f1; border-left: 0; }
.sub { list-style: none; margin: 0; padding: 6.8px 12px 8px; background: #32373c; font-size: 13px; }
.sub li { height: 28.2px; line-height: 28px; color: #b4b9be; }
.sub li.on { color: #fff; font-weight: 700; }
.collapse { display: flex; align-items: center; height: 32px; padding-left: 10px; gap: 10px; color: #a0a5aa; font-size: 13px; line-height: 28px; }
.collapse span { height: 30px; }

.content { padding: 10px 0 0 22px; }
.card { width: 1089px; height: 406px; background: #fff; border: 1px solid #e5e5e5; padding: 21px 11px 0; color: #23282d; }
h2 { margin: 0; height: 30px; font-size: 22.5px; line-height: 30px; font-weight: 400; }
.field { display: flex; margin-top: 27px; }
.th { width: 221px; flex: none; font-weight: 700; line-height: 22px; padding-top: 1px; }
.field input[type="text"] { width: 217px; height: 24px; margin: 0; padding: 2px 5px; border: 1px solid #ddd; box-shadow: inset 0 1px 2px rgba(0, 0, 0, .07); outline: none; background: #fff; }
.types { margin-top: 32px; }
.types .th { width: 220px; padding-top: 3px; }
.box { width: 871px; height: 171px; flex: none; background: #eee; padding-left: 18px; }
.opt { height: 57px; display: flex; align-items: center; color: #444; font-size: 14.5px; line-height: 59px; }
.opt input { appearance: none; width: 16px; height: 16px; margin: 0 7px 1px 0; border: 1px solid #b4b9be; background: #fff; box-shadow: inset 0 1px 2px rgba(0, 0, 0, .1); }
.opt span { height: 57px; }
button { display: flex; align-items: center; justify-content: center; margin-top: 35px; width: 103px; height: 28px; padding: 0; border: 1px solid #006799; border-top-color: #0073aa; border-radius: 3px; box-shadow: 0 1px 0 #006799; background: #0085ba; color: #fff; font: 13px/26px "Noto Sans", sans-serif; }
</style>
